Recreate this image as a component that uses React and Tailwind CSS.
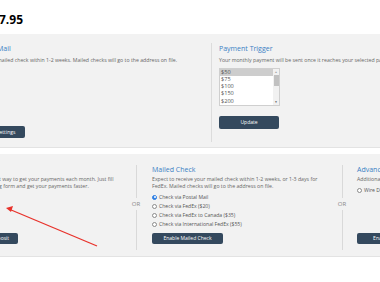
import React from "react";

const Radio = ({checked, label}) => (
  <div className="flex items-center gap-[2px] h-[9px]">
    {checked ? (
      <span className="w-[5px] h-[5px] rounded-full bg-[#2f7fe3] border border-[#2f7fe3] flex items-center justify-center">
        <span className="w-[2px] h-[2px] rounded-full bg-white"></span>
      </span>
    ) : (
      <span className="w-[5px] h-[5px] rounded-full bg-white border border-[#8a8a8a]"></span>
    )}
    <span className="text-[5.1px] leading-[7px] text-[#555] whitespace-nowrap">{label}</span>
  </div>
);

const OrSep = () => (
  <div className="w-[20px] shrink-0 flex flex-col items-center">
    <div className="w-px h-[33px] bg-[#d9d9d9]"></div>
    <div className="text-[6px] leading-[10px] text-[#8a8a8a] my-[1px]">OR</div>
    <div className="w-px flex-1 bg-[#d9d9d9]"></div>
  </div>
);

const Button = ({children, className}) => (
  <button className={"bg-[#34495e] text-white rounded-[2px] text-[5px] leading-[11px] h-[11px] whitespace-nowrap " + className}>
    {children}
  </button>
);

const App = () => {
  const amounts = ["$50", "$75", "$100", "$150", "$200"];

  return (
    <div className="relative w-[380px] h-[282px] overflow-hidden bg-white font-['Open_Sans',sans-serif]">
      <div className="h-[34px] pt-[13px]">
        <div className="-ml-[1px] text-[12px] leading-[14px] font-bold text-black">7.95</div>
      </div>

      {/* payment settings */}
      <div className="h-[114px] bg-[#f2f2f2] border-b border-[#e3e3e3] flex pt-[9px] pb-[5px]">
        <div className="-ml-[3px] w-[214px] shrink-0 flex flex-col pt-[1px] pb-[4px]">
          <div className="text-[7px] leading-[9px] text-[#3b7fc4]">Mail</div>
          <div className="mt-[4px] text-[5.2px] leading-[7px] text-[#666] whitespace-nowrap">
            mailed check within 1-2 weeks. Mailed checks will go to the address on file.
          </div>
          <Button className="mt-auto -ml-[22px] w-[50px] h-[12px] leading-[12px]">Save Settings</Button>
        </div>
        <div className="flex-1 border-l border-[#dcdcdc] pl-[7px] pt-[1px]">
          <div className="text-[7px] leading-[9px] text-[#3b7fc4]">Payment Trigger</div>
          <div className="mt-[4px] text-[5.2px] leading-[7px] text-[#666] whitespace-nowrap">
            Your monthly payment will be sent once it reaches your selected payment trigger amount.
          </div>
          <div className="mt-[3.5px] w-[61px] h-[38px] bg-white border border-[#cfcfcf] flex">
            <div className="flex-1">
              {amounts.map((a, i) => (
                <div
                  key={a}
                  className={"h-[7.3px] text-[5.6px] leading-[7.3px] pl-[1px] text-[#555] " + (i === 0 ? "bg-[#cdcdcd]" : "")}
                >
                  {a}
                </div>
              ))}
            </div>
            <div className="w-[6px] bg-[#f1f1f1] flex flex-col items-center">
              <div className="h-[6px] text-[3px] leading-[6px] text-[#a3a3a3]">▲</div>
              <div className="w-[5px] h-[11px] bg-[#c1c1c1]"></div>
              <div className="flex-1"></div>
              <div className="h-[6px] text-[3px] leading-[6px] text-[#505050]">▼</div>
            </div>
          </div>
          <Button className="mt-[5px] w-[60px] h-[13px] leading-[13px] text-[5.5px]">Update</Button>
        </div>
      </div>

      {/* payment methods */}
      <div className="mt-[6px] h-[103px] bg-[#f2f2f2] border-b border-[#e3e3e3] flex pt-[10.5px] pb-[6px]">
        <div className="w-[126px] shrink-0 flex flex-col pb-[6px]">
          <div className="mt-[11px] text-[5.2px] leading-[7px] text-[#666] whitespace-nowrap">
            <div className="-ml-[1px]">t way to get your payments each month. Just fill</div>
            <div className="-ml-[1px]">g form and get your payments faster.</div>
          </div>
          <Button className="mt-auto -ml-[33px] w-[51px]">Direct Deposit</Button>
        </div>

        <OrSep />

        <div className="w-[186px] shrink-0 pl-[6px] flex flex-col pb-[6px]">
          <div className="text-[7px] leading-[9px] text-[#3b7fc4]">Mailed Check</div>
          <div className="mt-[2px] w-[174px] text-[5.2px] leading-[7px] text-[#666]">
            Expect to receive your mailed check within 1-2 weeks, or 1-3 days for FedEx. Mailed checks will go to the address on file.
          </div>
          <div className="mt-[3px]">
            <Radio checked label="Check via Postal Mail" />
            <Radio label="Check via FedEx ($20)" />
            <Radio label="Check via FedEx to Canada ($35)" />
            <Radio label="Check via International FedEx ($55)" />
          </div>
          <Button className="mt-auto w-[71px]">Enable Mailed Check</Button>
        </div>

        <OrSep />

        <div className="flex-1 pl-[5px] flex flex-col pb-[6px]">
          <div className="text-[7px] leading-[9px] text-[#3b7fc4] whitespace-nowrap">Advanced Payment</div>
          <div className="mt-[2px] text-[5.2px] leading-[7px] text-[#666] whitespace-nowrap">Additional payment options</div>
          <div className="mt-[3px]">
            <Radio label="Wire Deposit" />
          </div>
          <Button className="mt-auto w-[60px]">Enable Wire</Button>
        </div>
      </div>

      {/* annotation arrow */}
      <svg className="absolute left-0 top-0 pointer-events-none" width="380" height="282" viewBox="0 0 380 282">
        <line x1="97" y1="246" x2="10" y2="209.5" stroke="#e8322b" strokeWidth="1.3" />
        <polygon points="6,208 13,206 11,212" fill="#e8322b" />
      </svg>
    </div>
  );
};

export default App;
